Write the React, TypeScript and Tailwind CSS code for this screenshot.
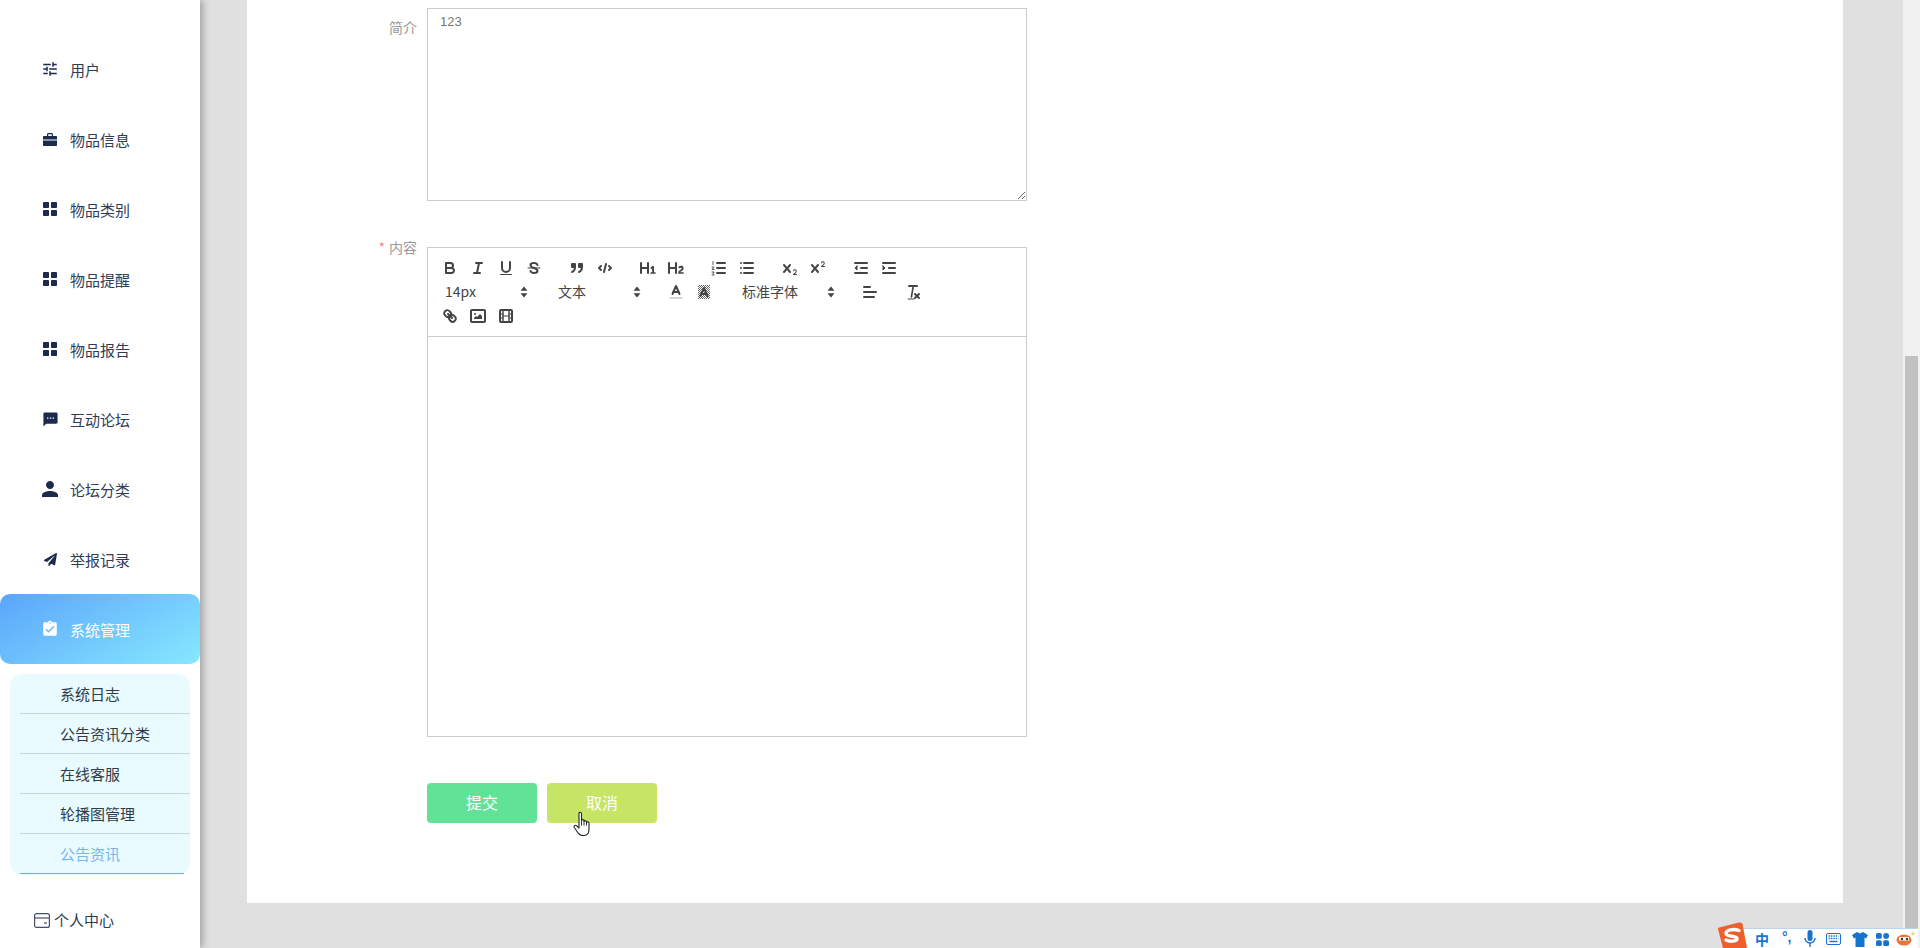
import React from "react";
import { MdTune, MdSms, MdPerson, MdAssignmentTurnedIn } from "react-icons/md";
import { FaPaperPlane } from "react-icons/fa";

const cjk = "font-['Noto_Sans_CJK_SC','Liberation_Sans',sans-serif]";

function Grid() {
  return (
    <svg width="14" height="14" viewBox="0 0 14 14" fill="#1c2a4d">
      <rect x="0" y="0" width="6" height="6" rx="0.8" />
      <rect x="8" y="0" width="6" height="6" rx="0.8" />
      <rect x="0" y="8" width="6" height="6" rx="0.8" />
      <rect x="8" y="8" width="6" height="6" rx="0.8" />
    </svg>
  );
}

function Case() {
  return (
    <svg width="14" height="13" viewBox="0 0 14 13" fill="#1c2a4d">
      <path d="M4 3V1.500C4 .7 4.700 0 5.500 0H8.500C9.300 0 10 .7 10 1.500V3H8.800V1.200H5.200V3Z" />
      <path d="M1 3H13C13.600 3 14 3.400 14 4V6.600H0V4C0 3.400 .4 3 1 3Z" />
      <path d="M0 7.400H14V12C14 12.600 13.600 13 13 13H1C.4 13 0 12.600 0 12Z" />
    </svg>
  );
}

const iconCls = "text-[#1c2a4d]";
const navItems: { label: string; icon: React.ReactNode }[] = [
  { label: "用户", icon: <MdTune size={18} className={iconCls} /> },
  { label: "物品信息", icon: <Case /> },
  { label: "物品类别", icon: <Grid /> },
  { label: "物品提醒", icon: <Grid /> },
  { label: "物品报告", icon: <Grid /> },
  { label: "互动论坛", icon: <MdSms size={17} className={iconCls} /> },
  { label: "论坛分类", icon: <MdPerson size={24} className={`${iconCls} shrink-0`} /> },
  { label: "举报记录", icon: <FaPaperPlane size={13} className={iconCls} /> },
];
const subItems = ["系统日志", "公告资讯分类", "在线客服", "轮播图管理"];

function Sidebar() {
  return (
    <aside className={`w-[200px] shrink-0 h-[948px] bg-white relative z-10 shadow-[3px_0_7px_rgba(0,0,0,0.28)] pt-[34px] ${cjk}`}>
      {navItems.map((n) => (
        <div key={n.label} className="h-[70px] flex items-center pl-[40px] text-[15px] text-[#303b56]">
          <span className="w-[20px] h-[20px] flex items-center justify-center mr-[10px]">{n.icon}</span>
          <span className="pt-[2px]">{n.label}</span>
        </div>
      ))}
      <div className="h-[70px] flex items-center pl-[40px] text-[15px] text-white rounded-[10px] bg-[linear-gradient(150deg,#5aa5fb,#87e8ff)]">
        <span className="w-[20px] h-[20px] flex items-center justify-center mr-[10px]">
          <MdAssignmentTurnedIn size={18} className="text-white" />
        </span>
        <span className="pt-[2px]">系统管理</span>
      </div>
      <div className="mt-[10px] mx-[10px] h-[201px] pl-[10px] rounded-[12px] bg-[#e9fbff] text-[15px] text-[#303b48]">
        {subItems.map((s) => (
          <div key={s} className="h-[40px] flex items-center pl-[40px] pt-[2px] border-b border-[#c6d5df]">{s}</div>
        ))}
        <div className="h-[40px] w-[164px] flex items-center pl-[40px] pt-[2px] border-b border-[#72abd2] text-[#74b6f3]">公告资讯</div>
      </div>
      <div className="mt-[34px] pl-[34px] flex items-center text-[15px] text-[#303b56]">
        <svg width="16" height="15" viewBox="0 0 16 15" fill="none" stroke="#46506a" strokeWidth="1.2" className="mr-[4px]">
          <rect x="0.6" y="0.6" width="14.8" height="13.8" rx="2" />
          <line x1="0.6" y1="5" x2="15.4" y2="5" />
          <line x1="10" y1="10" x2="13" y2="10" />
        </svg>
        个人中心
      </div>
    </aside>
  );
}

const S = "none";
function Ic({ children }: { children: React.ReactNode }) {
  return (
    <span className="w-[28px] h-[24px] px-[5px] py-[3px] shrink-0 block">
      <svg width="18" height="18" viewBox="0 0 18 18" fill="none" stroke="#444" strokeWidth="2" strokeLinecap="round" strokeLinejoin="round">
        {children}
      </svg>
    </span>
  );
}
const thin = { strokeWidth: 1 };
const nofill = { stroke: S, fill: "#444" };

function Picker({ label, w }: { label: string; w: string }) {
  return (
    <span className={`${w} h-[24px] pl-[9px] pr-[5px] flex items-center justify-between text-[14px] text-[#444] shrink-0`}>
      <span className="-mt-[2px]">{label}</span>
      <svg width="8" height="12" viewBox="0 0 8 12" fill="#444" className="mr-[1px]">
        <polygon points="4,0.5 7.5,4.8 0.5,4.8" />
        <polygon points="4,11.5 7.5,7.2 0.5,7.2" />
      </svg>
    </span>
  );
}

function Toolbar() {
  return (
    <div className={`h-[89px] p-[8px] pb-0 border-b border-[#ccc] ${cjk}`}>
      <div className="flex h-[24px] gap-[15px]">
        <div className="flex">
          <Ic><path d="M5,4H9.5A2.5,2.5,0,0,1,12,6.5v0A2.5,2.5,0,0,1,9.5,9H5V4Z" /><path d="M5,9h5.5A2.5,2.5,0,0,1,13,11.5v0A2.5,2.5,0,0,1,10.5,14H5V9Z" /></Ic>
          <Ic><line x1="7" x2="13" y1="4" y2="4" /><line x1="5" x2="11" y1="14" y2="14" /><line x1="8" x2="10" y1="14" y2="4" /></Ic>
          <Ic><path d="M5,3V9a4,4,0,0,0,4,4H9a4,4,0,0,0,4-4V3" /><rect x="3" y="15" width="12" height="1" rx="0.5" {...nofill} /></Ic>
          <Ic><line x1="3" x2="15" y1="9" y2="9" {...thin} /><path d="M12.5 6C12 4.700 10.6 4 9 4 7 4 5.500 4.900 5.500 6.200 5.500 7.600 7 8.300 9 9 11 9.700 12.500 10.400 12.500 11.800 12.500 13.100 11 14 9 14 7.400 14 6 13.300 5.500 12" /></Ic>
        </div>
        <div className="flex">
          <Ic><rect x="4" y="5" width="3" height="3" fill="#444" /><rect x="11" y="5" width="3" height="3" fill="#444" /><path d="M7,8c0,4-3,5-3,5" /><path d="M14,8c0,4-3,5-3,5" /></Ic>
          <Ic><polyline points="5 7 3 9 5 11" /><polyline points="13 7 15 9 13 11" /><line x1="10" x2="8" y1="5" y2="13" /></Ic>
        </div>
        <div className="flex">
          <Ic><path {...nofill} d="M10,4V14a1,1,0,0,1-2,0V10H3v4a1,1,0,0,1-2,0V4A1,1,0,0,1,3,4V8H8V4a1,1,0,0,1,2,0Zm6.06787,9.209H14.98975V7.59863a.54085.54085,0,0,0-.605-.60547h-.62744a1.01119,1.01119,0,0,0-.748.29688L11.645,8.56641a.5435.5435,0,0,0-.022.8584l.28613.30762a.53861.53861,0,0,0,.84717.0332l.09912-.08789a1.2137,1.2137,0,0,0,.2417-.35254h.02246s-.01123.30859-.01123.60547V13.209H12.041a.54085.54085,0,0,0-.605.60547v.43945a.54085.54085,0,0,0,.605.60547h4.02686a.54085.54085,0,0,0,.605-.60547v-.43945A.54085.54085,0,0,0,16.06787,13.209Z" /></Ic>
          <Ic><path {...nofill} d="M16.73975,13.81445v.43945a.54085.54085,0,0,1-.605.60547H11.855a.58392.58392,0,0,1-.64893-.60547V14.0127c0-2.90527,3.39941-3.42187,3.39941-4.55469a.77675.77675,0,0,0-.84717-.78125,1.17684,1.17684,0,0,0-.83594.38477c-.2749.26367-.561.374-.85791.13184l-.4292-.34082c-.30811-.24219-.38525-.51758-.1543-.81445a2.97155,2.97155,0,0,1,2.45361-1.17676,2.45393,2.45393,0,0,1,2.68408,2.40918c0,2.45312-3.1792,2.92676-3.27832,3.93848h2.79443A.54085.54085,0,0,1,16.73975,13.81445ZM9,3A.99974.99974,0,0,0,8,4V8H3V4A1,1,0,0,0,1,4V14a1,1,0,0,0,2,0V10H8v4a1,1,0,0,0,2,0V4A.99974.99974,0,0,0,9,3Z" /></Ic>
        </div>
        <div className="flex">
          <Ic><line x1="7" x2="15" y1="4" y2="4" /><line x1="7" x2="15" y1="9" y2="9" /><line x1="7" x2="15" y1="14" y2="14" /><path d="M3 2.5V5.5M2 8L4.2 8 2 10.5H4.2M2 13H4.2L3 14.5 4.2 16H2" strokeWidth="0.9" /></Ic>
          <Ic><line x1="6" x2="15" y1="4" y2="4" /><line x1="6" x2="15" y1="9" y2="9" /><line x1="6" x2="15" y1="14" y2="14" /><line x1="3" x2="3" y1="4" y2="4" /><line x1="3" x2="3" y1="9" y2="9" /><line x1="3" x2="3" y1="14" y2="14" /></Ic>
        </div>
        <div className="flex">
          <Ic><path {...nofill} d="M15.5,15H13.861a3.858,3.858,0,0,0,1.914-2.975,1.8,1.8,0,0,0-1.6-1.751A1.921,1.921,0,0,0,12.021,11.7a0.50013,0.50013,0,1,0,.957.291h0a0.914,0.914,0,0,1,1.053-.725,0.81,0.81,0,0,1,.744.762c0,1.076-1.16971,1.86982-1.93971,2.43082A1.45639,1.45639,0,0,0,12,15.5a0.5,0.5,0,0,0,.5.5h3A0.5,0.5,0,0,0,15.5,15Z" /><path {...nofill} d="M9.65,5.241a1,1,0,0,0-1.409.108L6,7.964,3.759,5.349A1,1,0,0,0,2.192,6.59178Q2.2,6.6,2.241,6.651L4.684,9.5,2.241,12.35A1,1,0,0,0,3.71,13.70722q0.02-.02.049-0.05L6,11.036,8.241,13.65a1,1,0,1,0,1.567-1.24277Q9.8,12.4,9.759,12.35L7.316,9.5,9.759,6.651A1,1,0,0,0,9.65,5.241Z" /></Ic>
          <Ic><path {...nofill} d="M15.5,7H13.861a4.015,4.015,0,0,0,1.914-2.975,1.8,1.8,0,0,0-1.6-1.751A1.922,1.922,0,0,0,12.021,3.7a0.5,0.5,0,1,0,.957.291,0.917,0.917,0,0,1,1.053-.725,0.81,0.81,0,0,1,.744.762c0,1.077-1.164,1.925-1.934,2.486A1.423,1.423,0,0,0,12,7.5a0.5,0.5,0,0,0,.5.5h3A0.5,0.5,0,0,0,15.5,7Z" /><path {...nofill} d="M9.651,5.241a1,1,0,0,0-1.41.108L6,7.964,3.759,5.349a1,1,0,1,0-1.519,1.3L4.683,9.5,2.241,12.35a1,1,0,1,0,1.519,1.3L6,11.036,8.241,13.65a1,1,0,0,0,1.519-1.3L7.317,9.5,9.759,6.651A1,1,0,0,0,9.651,5.241Z" /></Ic>
        </div>
        <div className="flex">
          <Ic><line x1="3" x2="15" y1="14" y2="14" /><line x1="3" x2="15" y1="4" y2="4" /><line x1="9" x2="15" y1="9" y2="9" /><polygon points="5 7 5 11 3 9 5 7" fill="#444" strokeWidth="1" /></Ic>
          <Ic><line x1="3" x2="15" y1="14" y2="14" /><line x1="3" x2="15" y1="4" y2="4" /><line x1="9" x2="15" y1="9" y2="9" /><polygon points="3 7 3 11 5 9 3 7" fill="#444" strokeWidth="1" /></Ic>
        </div>
      </div>
      <div className="flex h-[24px] gap-[15px]">
        <Picker label="14px" w="w-[98px]" />
        <Picker label="文本" w="w-[98px]" />
        <div className="flex">
          <Ic><line x1="3" x2="15" y1="15" y2="15" stroke="#aaa" strokeWidth="1" /><polyline points="5.5 11 9 3 12.5 11" /><line x1="11.63" x2="6.38" y1="9" y2="9" /></Ic>
          <Ic>
            <defs>
              <pattern id="dots" width="2" height="2" patternUnits="userSpaceOnUse">
                <rect width="1" height="1" fill="#666" stroke="none" />
                <rect x="1" y="1" width="1" height="1" fill="#666" stroke="none" />
              </pattern>
            </defs>
            <rect x="3" y="2" width="12" height="14" fill="url(#dots)" stroke="none" />
            <polyline points="5.5 13 9 5 12.5 13" strokeWidth="2" />
            <line x1="11.63" x2="6.38" y1="11" y2="11" strokeWidth="2" />
          </Ic>
        </div>
        <Picker label="标准字体" w="w-[108px]" />
        <Ic><line x1="3" x2="15" y1="9" y2="9" /><line x1="3" x2="13" y1="14" y2="14" /><line x1="3" x2="9" y1="4" y2="4" /></Ic>
        <Ic><line x1="5" x2="13" y1="3" y2="3" /><line x1="11" x2="15" y1="11" y2="15" /><line x1="15" x2="11" y1="11" y2="15" /><line x1="9.3" x2="7.4" y1="3" y2="14" strokeWidth="1.6" /><line x1="4" x2="10" y1="16" y2="16" strokeWidth="1" /></Ic>
      </div>
      <div className="flex h-[24px]">
        <Ic><line x1="7" x2="11" y1="7" y2="11" /><path d="M8.9,4.577a3.476,3.476,0,0,1,.36,4.679A3.476,3.476,0,0,1,4.577,8.9C3.185,7.5,2.035,6.4,4.217,4.217S7.5,3.185,8.9,4.577Z" /><path d="M13.423,9.1a3.476,3.476,0,0,0-4.679-.36,3.476,3.476,0,0,0,.36,4.679c1.392,1.392,2.5,2.542,4.679.36S14.815,10.5,13.423,9.1Z" /></Ic>
        <Ic><rect x="2" y="3" width="14" height="12" rx="1" /><circle cx="6" cy="7" r="1" fill="#444" stroke="none" /><polyline points="5 12 5 11 7 9 8 10 11 7 13 9 13 12 5 12" fill="#444" stroke="none" /></Ic>
        <Ic><rect x="3" y="3" width="12" height="12" rx="1" /><line x1="6" x2="6" y1="3" y2="15" strokeWidth="1.4" /><line x1="12" x2="12" y1="3" y2="15" strokeWidth="1.4" /><line x1="3" x2="6" y1="7" y2="7" strokeWidth="1.2" /><line x1="3" x2="6" y1="11" y2="11" strokeWidth="1.2" /><line x1="12" x2="15" y1="7" y2="7" strokeWidth="1.2" /><line x1="12" x2="15" y1="11" y2="11" strokeWidth="1.2" /><line x1="6" x2="12" y1="9" y2="9" strokeWidth="1.2" /></Ic>
      </div>
    </div>
  );
}

function Form() {
  return (
    <div className={`h-[903px] bg-white pt-[8px] ${cjk}`}>
      <div className="flex">
        <label className="w-[170px] mr-[10px] text-right text-[14px] text-[#999] pt-[8px] leading-[22px]">简介</label>
        <textarea
          readOnly
          defaultValue="123"
          className="w-[600px] h-[193px] border border-[#ccc] outline-none px-[12px] py-[3px] text-[13px] leading-[20px] text-[#777] font-['Liberation_Sans',sans-serif] resize-y block"
        />
      </div>
      <div className="flex mt-[46px]">
        <label className="w-[170px] mr-[10px] text-right text-[14px] text-[#999] leading-[14px] -mt-[7px]">
          <span className="text-[#f08a94] mr-[4px]">*</span>内容
        </label>
        <div className="w-[600px] h-[490px] border border-[#ccc]">
          <Toolbar />
        </div>
      </div>
      <div className="flex mt-[46px] pl-[180px] gap-[10px]">
        <button className="w-[110px] h-[40px] pb-[2px] rounded-[4px] bg-[#62e296] text-white text-[16px]">提交</button>
        <button className="w-[110px] h-[40px] pb-[2px] rounded-[4px] bg-[#c6e564] text-white text-[16px]">取消</button>
      </div>
    </div>
  );
}

function Ime() {
  return (
    <div className="absolute right-0 bottom-0 w-[204px] h-[26px] z-20 pointer-events-none">
      <div className="absolute left-[27px] right-[2px] top-[6px] h-[20px] bg-white border-t border-[#b9d4ee] text-[#1673cf]">
        <span className="absolute left-[12px] top-[1px] text-[14px] leading-[18px] font-bold font-['Noto_Sans_CJK_SC',sans-serif]">中</span>
        <span className="absolute left-[39px] top-[-1px] text-[14px] leading-[18px] font-bold font-['Liberation_Sans',sans-serif]">°,</span>
        <svg className="absolute left-[61px] top-[1px]" width="12" height="18" viewBox="0 0 12 18" fill="#1673cf">
          <rect x="3.5" y="0" width="5" height="11" rx="2.5" />
          <path d="M1 8a5 5 0 0 0 10 0" fill="none" stroke="#1673cf" strokeWidth="1.4" />
          <rect x="5.3" y="13" width="1.4" height="4" />
        </svg>
        <svg className="absolute left-[83px] top-[4px]" width="15" height="12" viewBox="0 0 15 12">
          <rect x="0.5" y="0.5" width="14" height="11" rx="1.5" fill="#fff" stroke="#1673cf" />
          <path d="M2.5 3h10M2.5 5.5h10" stroke="#1673cf" strokeWidth="1.4" strokeDasharray="1.4 1" />
          <path d="M3.5 8.5h8" stroke="#1673cf" strokeWidth="1.4" />
        </svg>
        <svg className="absolute left-[109px] top-[3px]" width="16" height="15" viewBox="0 0 16 15" fill="#1673cf">
          <path d="M5 0 L8 1.5 L11 0 L16 3 L14 6.5 L12.5 5.5 V15 H3.5 V5.5 L2 6.5 L0 3 Z" />
        </svg>
        <svg className="absolute left-[133px] top-[4px]" width="13" height="13" viewBox="0 0 13 13" fill="#1673cf">
          <rect width="5.8" height="5.8" rx="1.6" />
          <rect x="7.2" width="5.8" height="5.8" rx="2.9" />
          <rect y="7.2" width="5.8" height="5.8" rx="1.6" />
          <rect x="7.2" y="7.2" width="5.8" height="5.8" rx="1.6" />
        </svg>
        <svg className="absolute left-[153px] top-[1px]" width="20" height="17" viewBox="0 0 20 17">
          <ellipse cx="8" cy="10" rx="7.5" ry="5.5" fill="#e8763a" />
          <rect x="3" y="7" width="10" height="3.5" fill="#fff" />
          <circle cx="6" cy="9" r="1.2" fill="#333" />
          <circle cx="11" cy="9" r="1.2" fill="#333" />
          <path d="M17 1l.8 2 2 .8-2 .8-.8 2-.8-2-2-.8 2-.8z" fill="#f5d76e" />
        </svg>
      </div>
      <svg className="absolute left-0 top-0" width="32" height="26" viewBox="0 0 32 26">
        <path d="M2 7 Q1.500 6 3 5.500 L23 .5 Q26 0 26.500 2 L31 26 H7 Z" fill="#ee5f2b" />
        <path d="M23 8.500 C17 6.500 10 8 10 11.500 C10 15 21 13.500 21 16.500 C21 19.500 14 20 10 18" fill="none" stroke="#fff" strokeWidth="3.4" strokeLinecap="round" />
      </svg>
    </div>
  );
}

function Hand() {
  return (
    <svg className="absolute left-[573px] top-[811px] z-20" width="20" height="26" viewBox="0 0 20 26">
      <path
        d="M6 2.300C6 .8 8.500 .8 8.500 2.300V9.500C8.700 8.300 11 8.300 11 9.700V10.500C11.300 9.300 13.500 9.400 13.500 10.900V11.500C14 10.500 16 10.800 16 12.200V18C16 21.500 14.500 24.500 11 24.500H9.500C7.500 24.500 6.500 23.700 5.300 22.200L1.300 16.500C.3 15 2 13.500 3.500 14.700L6 17Z"
        fill="#fff"
        stroke="#222"
        strokeWidth="1.1"
        strokeLinejoin="round"
      />
      <path d="M8.500 9.500V14.500M11 10.500V14.500M13.500 11.500V14.500" stroke="#222" strokeWidth="0.9" fill="none" />
    </svg>
  );
}

export default function App() {
  return (
    <div className="relative w-[1920px] h-[948px] overflow-hidden flex bg-[#e0e0e0]">
      <Sidebar />
      <main className="flex-1 min-w-0 pl-[47px] pr-[60px]">
        <Form />
      </main>
      <div className="w-[17px] shrink-0 h-[948px] bg-[#f1f1f1] pt-[356px] px-[2px]">
        <div className="h-[592px] bg-[#c1c1c1]" />
      </div>
      <Hand />
      <Ime />
    </div>
  );
}
